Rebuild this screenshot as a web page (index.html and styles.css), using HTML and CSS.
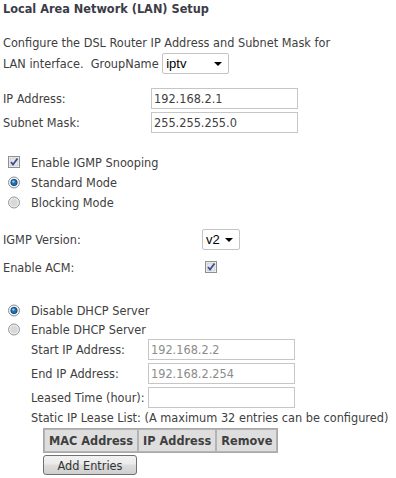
FILE: index.html
```html
<!DOCTYPE html>
<html lang="en">
<head>
    <meta charset="UTF-8">
    <title>LAN Setup</title>
    <link rel="stylesheet" href="styles.css">
</head>
<body>
    <div class="title">Local Area Network (LAN) Setup</div>

    <p class="intro">
        Configure the DSL Router IP Address and Subnet Mask for<br>
        LAN interface.&nbsp; GroupName
        <span class="select_wrap group_select"><select class="select"><option>iptv</option></select></span>
    </p>

    <div class="fields">
        <label class="field_label">IP Address:</label>
        <input type="text" class="text_box" value="192.168.2.1">
        <label class="field_label">Subnet Mask:</label>
        <input type="text" class="text_box" value="255.255.255.0">
    </div>

    <div class="checks">
        <div class="opt_row">
            <svg class="check_icon" width="13" height="13" viewBox="0 0 13 13">
                <rect x="0.5" y="0.5" width="11" height="11" fill="#fff" stroke="#8e8f8f"/>
                <rect x="2" y="2" width="8" height="8" fill="#e6e6e6" stroke="#c3c6cc" stroke-width="0.8"/>
                <path d="M3 6 L5 8.5 L9.5 2.5" fill="none" stroke="#3b4f94" stroke-width="1.8"/>
            </svg>
            <span>Enable IGMP Snooping</span>
        </div>
        <div class="opt_row">
            <svg class="radio_icon" width="13" height="13" viewBox="0 0 13 13">
                <circle cx="6" cy="6.5" r="5.5" fill="#f2f2f2" stroke="#8e8f8f"/>
                <circle cx="6" cy="6.5" r="3.2" fill="#1e6fb8" stroke="#0b3f75" stroke-width="0.8"/>
                <circle cx="5.3" cy="5.6" r="1.2" fill="#8fd0f5"/>
            </svg>
            <span>Standard Mode</span>
        </div>
        <div class="opt_row">
            <svg class="radio_icon" width="13" height="13" viewBox="0 0 13 13">
                <circle cx="6" cy="6.5" r="5.5" fill="#e8e8e8" stroke="#9a9a9a"/>
                <circle cx="6" cy="6.5" r="3.5" fill="#d8d8d8"/>
            </svg>
            <span>Blocking Mode</span>
        </div>
    </div>

    <div class="igmp">
        <label class="field_label">IGMP Version:</label>
        <span class="select_wrap ver_select"><select class="select"><option>v2</option></select></span>
        <label class="field_label acm_label">Enable ACM:</label>
        <svg class="acm_check" width="13" height="13" viewBox="0 0 13 13">
            <rect x="0.5" y="0.5" width="11" height="11" fill="#fff" stroke="#8e8f8f"/>
            <rect x="2" y="2" width="8" height="8" fill="#e6e6e6" stroke="#c3c6cc" stroke-width="0.8"/>
            <path d="M3 6 L5 8.5 L9.5 2.5" fill="none" stroke="#3b4f94" stroke-width="1.8"/>
        </svg>
    </div>

    <div class="dhcp">
        <div class="opt_row dhcp_row">
            <svg class="radio_icon" width="13" height="13" viewBox="0 0 13 13">
                <circle cx="6" cy="6.5" r="5.5" fill="#f2f2f2" stroke="#8e8f8f"/>
                <circle cx="6" cy="6.5" r="3.2" fill="#1e6fb8" stroke="#0b3f75" stroke-width="0.8"/>
                <circle cx="5.3" cy="5.6" r="1.2" fill="#8fd0f5"/>
            </svg>
            <span>Disable DHCP Server</span>
        </div>
        <div class="opt_row dhcp_row">
            <svg class="radio_icon" width="13" height="13" viewBox="0 0 13 13">
                <circle cx="6" cy="6.5" r="5.5" fill="#e8e8e8" stroke="#9a9a9a"/>
                <circle cx="6" cy="6.5" r="3.5" fill="#d8d8d8"/>
            </svg>
            <span>Enable DHCP Server</span>
        </div>

        <div class="lease">
            <label class="field_label">Start IP Address:</label>
            <input type="text" class="text_box off" value="192.168.2.2">
            <label class="field_label">End IP Address:</label>
            <input type="text" class="text_box off" value="192.168.2.254">
            <label class="field_label">Leased Time (hour):</label>
            <input type="text" class="text_box" value="">
        </div>

        <div class="static_note">Static IP Lease List: (A maximum 32 entries can be configured)</div>
        <table class="lease_table">
            <tr>
                <th>MAC Address</th>
                <th>IP Address</th>
                <th>Remove</th>
            </tr>
        </table>
        <button class="add_btn">Add Entries</button>
    </div>
</body>
</html>
```

FILE: styles.css
```css
body{
    margin:0;
    padding:0 3px;
    font-family:Tahoma, "DejaVu Sans Condensed", "DejaVu Sans", sans-serif;
    font-stretch:condensed;
    font-size:12.6px;
    color:#404040;
    background:#fff;
}
.title{
    font-weight:bold;
    line-height:18px;
    height:18px;
    color:#3c3c48;
}
.intro{
    margin:15px 0 0;
    line-height:20px;
}
.select_wrap{
    position:relative;
    display:inline-block;
    vertical-align:baseline;
}
.select_wrap:after{
    content:"";
    position:absolute;
    right:7px;
    top:9px;
    border-left:4px solid transparent;
    border-right:4px solid transparent;
    border-top:4px solid #000;
    pointer-events:none;
}
.select{
    appearance:none;
    -webkit-appearance:none;
    height:21px;
    margin:0;
    padding:0 0 0 3px;
    border:1px solid #c4c4c4;
    border-radius:2px;
    background:#fff;
    font-family:"Liberation Sans", Arial, sans-serif;
    font-size:13px;
    color:#000;
}
.group_select .select{
    width:67px;
}
.ver_select .select{
    width:38px;
}
.fields{
    margin-top:14px;
    display:grid;
    grid-template-columns:148px 147px;
    row-gap:3px;
    align-items:center;
}
.text_box{
    box-sizing:border-box;
    width:147px;
    height:21px;
    margin:0;
    padding:0 2px;
    border:1px solid #c6c6c6;
    font-family:inherit;
    font-stretch:condensed;
    font-size:12.6px;
    color:#404040;
}
.text_box.off{
    color:#8c8c8c;
}
.checks{
    margin-top:19px;
}
.opt_row{
    height:20px;
    display:flex;
    align-items:center;
}
.check_icon,
.radio_icon{
    margin-left:5px;
    margin-right:10px;
    flex-shrink:0;
}
.igmp{
    margin-top:17px;
    display:grid;
    grid-template-columns:199px auto;
    grid-template-rows:21px 20px;
    row-gap:7px;
    align-items:center;
    justify-items:start;
}
.acm_check{
    margin-left:3px;
}
.dhcp{
    margin-top:24px;
}
.dhcp_row{
    height:19px;
}
.lease{
    margin-left:28px;
    display:grid;
    grid-template-columns:117px 147px;
    grid-auto-rows:21px;
    row-gap:3px;
    align-items:center;
}
.static_note{
    margin-left:28px;
    line-height:20px;
    white-space:nowrap;
}
.lease_table{
    margin-left:40px;
    border:1px solid #a9a9a9;
    border-spacing:0;
}
.lease_table th{
    height:21px;
    padding:0 4px;
    background:#dedede;
    border:1px solid #b4b4b4;
    font-weight:bold;
    color:#404040;
    white-space:nowrap;
}
.add_btn{
    display:block;
    width:94px;
    height:20px;
    margin:2px 0 0 40px;
    padding:0;
    border:1px solid #707070;
    border-radius:3px;
    background:linear-gradient(#f2f2f2, #ebebeb 45%, #dddddd 50%, #cfcfcf);
    font-family:inherit;
    font-stretch:condensed;
    font-size:12.6px;
    color:#333;
}
```
